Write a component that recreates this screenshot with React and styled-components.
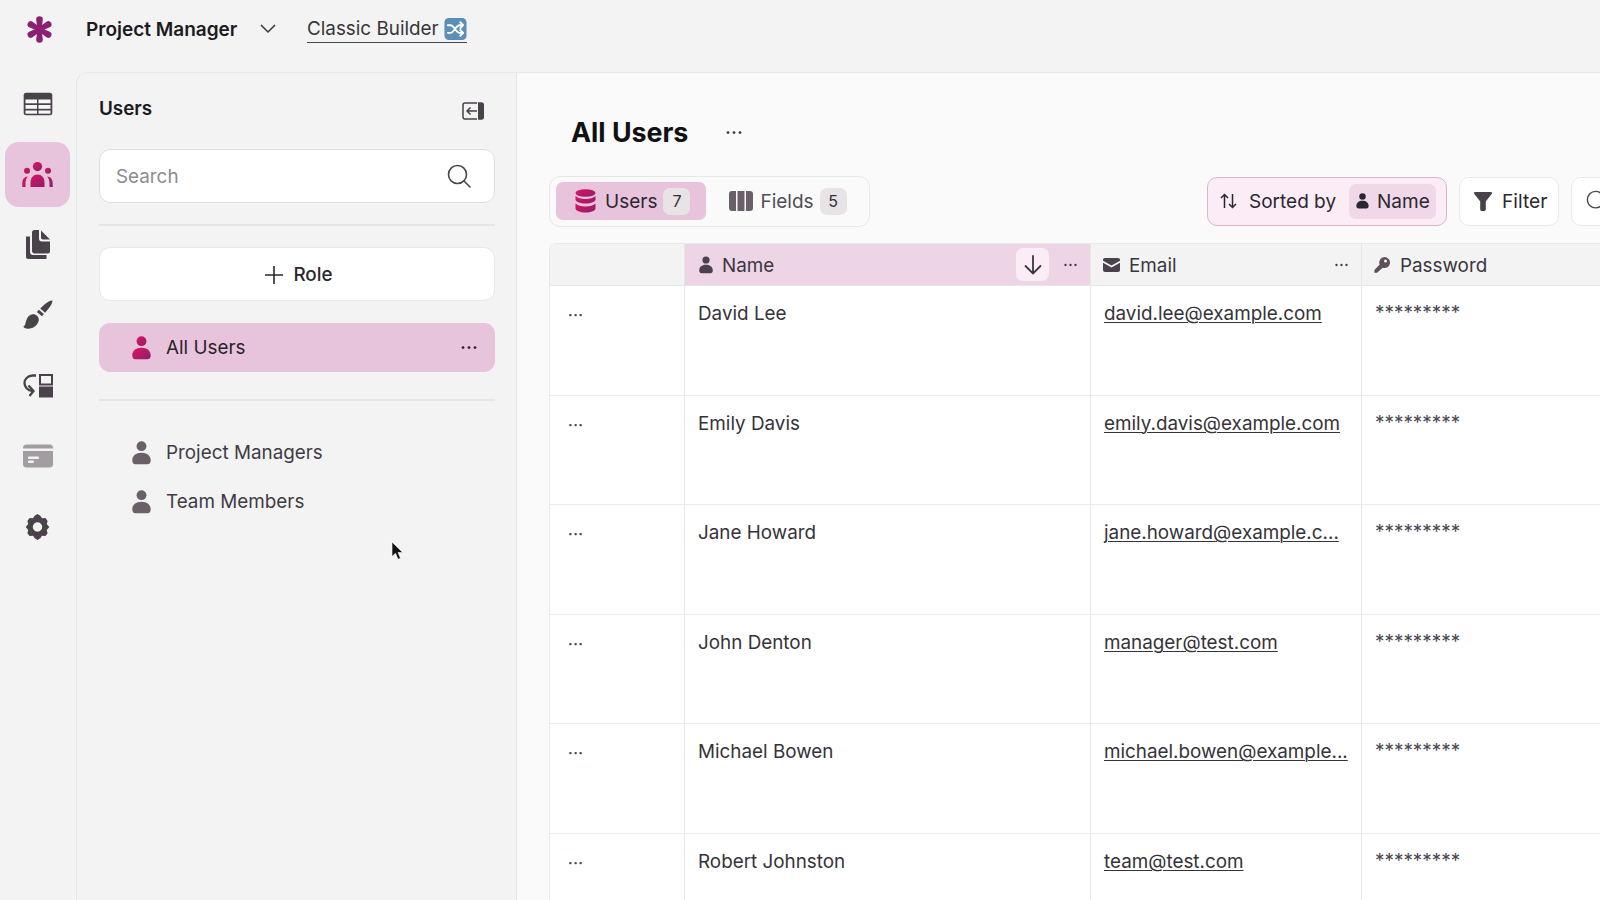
import React from "react";
import styled, { createGlobalStyle } from "styled-components";

const Global = createGlobalStyle`
  html, body { margin: 0; padding: 0; background: #f3f3f3; overflow: hidden; }
  * { box-sizing: border-box; }
  body { font-family: Inter, "Liberation Sans", sans-serif; color: #2b2730; -webkit-font-smoothing: antialiased; }
`;

const Page = styled.div`
  position: relative; width: 1600px; height: 900px; overflow: hidden;
  display: flex; flex-direction: column; background: #f3f3f3;
`;
const TopBar = styled.header`
  height: 72px; flex: none; display: flex; align-items: center; padding: 0 0 14px 25px;
`;
const LogoWrap = styled.div`width: 29px; height: 29px; margin-right: 32px; display: flex;`;
const AppName = styled.div`font-size: 19px; font-weight: 600; color: #1c1a1f; width: 150px; white-space: nowrap;`;
const ChevronWrap = styled.div`margin-left: 24px; width: 18px; display: flex;`;
const BuilderLink = styled.div`
  margin-left: 29px; font-size: 18.85px; color: #37343a; display: flex; align-items: center; gap: 5px;
  border-bottom: 1.5px solid #4a4650; height: 27px; line-height: 25px;
`;
const Body = styled.div`flex: 1; display: flex; min-height: 0;`;
const Rail = styled.nav`
  width: 76px; flex: none; display: flex; flex-direction: column; align-items: flex-start; padding: 0 0 0 5px; margin-top: -1px;
`;
const RailItem = styled.div`
  width: 65px; height: 65px; margin-bottom: 5.5px; border-radius: 14px; display: flex; align-items: center; justify-content: center;
  background: ${p => (p.$active ? "#e8c3dc" : "transparent")};
`;
const Panel = styled.aside`
  width: 441px; flex: none; background: #f3f3f3; border-left: 1px solid #e6e6e6; border-top: 1px solid #e9e9e9;
  border-right: 1px solid #e6e6e6; border-top-left-radius: 12px; padding: 0 21px 0 22px; display: flex; flex-direction: column;
`;
const PanelHead = styled.div`height: 76px; display: flex; align-items: center; justify-content: space-between; padding: 0 11px 6px 0;`;
const PanelTitle = styled.h2`margin: 0; font-size: 18.85px; font-weight: 600; color: #1c1a1f;`;
const CollapseSlot = styled.div`display: flex; margin-top: 5px;`;
const SearchBox = styled.div`
  height: 54px; background: #fff; border: 1.5px solid #dfdfdf; border-radius: 11px; display: flex; align-items: center; justify-content: space-between;
  padding: 0 23px 0 16px; font-size: 18.85px; color: #8d8a90;
`;
const Rule = styled.hr`border: 0; height: 2px; background: #e6e6e6; margin: ${p => p.$m};`;
const RoleButton = styled.div`
  height: 54px; background: #fff; border: 1.5px solid #e8e8e8; border-radius: 11px; display: flex; align-items: center; justify-content: center; gap: 9px;
  padding: 1px 0 0 3px; font-size: 18.85px; font-weight: 500; color: #2b2730;
`;
const RoleGap = styled.div`height: 22px; flex: none;`;
const RoleRow = styled.div`
  height: 49px; border-radius: 11px; display: flex; align-items: center; padding: 0 17px 0 33px; gap: 15px; font-size: 18.85px;
  background: ${p => (p.$active ? "#e8c3dc" : "transparent")};
  color: ${p => (p.$active ? "#28232b" : "#3f3b44")};
`;
const RoleLabel = styled.span`flex: 1;`;
const RoleList = styled.div`display: flex; flex-direction: column; padding-top: 27px;`;
const Hidden = styled.svg`width: 0; height: 0; position: absolute;`;
const Main = styled.main`flex: 1; min-width: 0; background: #fafafa; border-top: 1px solid #e9e9e9; padding-left: 32px; overflow: hidden;`;
const TitleRow = styled.div`height: 103px; display: flex; align-items: center; padding: 15px 0 0 22px; gap: 38px;`;
const Title = styled.h1`margin: 0; font-size: 26.8px; font-weight: 700; color: #111; width: 116px; white-space: nowrap;`;
const TitleDots = styled.span`display: flex; padding-top: 2px;`;
const Toolbar = styled.div`display: flex; align-items: center; height: 50px; width: 1100px;`;
const TabGroup = styled.div`
  width: 321px; height: 51px; flex: none; border: 1.5px solid #e8e8e8; border-radius: 11px; padding: 5px 5px 5px 6px; display: flex; gap: 7px;
`;
const Tab = styled.div`
  height: 38px; border-radius: 7px; display: flex; align-items: center; font-size: 19px; padding: 1px 16px 0 ${p => (p.$active ? "19px" : "16px")};
  background: ${p => (p.$active ? "#e8c3dc" : "transparent")}; color: ${p => (p.$active ? "#2b2730" : "#514c55")};
`;
const TabLabel = styled.span`margin: 0 6px 0 ${p => (p.$active ? "9px" : "7px")};`;
const Count = styled.span`
  width: 27px; height: 27px; border-radius: 7px; background: #e8e4e6; display: flex; align-items: center; justify-content: center; font-size: 16px; color: #332f36;
`;
const SortBox = styled.div`
  margin-left: 337px; width: 240px; height: 49px; flex: none; border: 1.5px solid #dcb4d0; background: #fbecf6; border-radius: 10px; display: flex; align-items: center;
  padding: 0 0 0 12px; font-size: 19px; color: #2b2730; white-space: nowrap;
`;
const SortLabel = styled.span`margin-left: 12px; margin-right: 12px; width: 88px;`;
const SortChip = styled.span`
  height: 35px; width: 87px; border-radius: 7px; background: #f0d8e9; display: flex; align-items: center; gap: 8px; padding-left: 7px; color: #2b2730;
`;
const ToolButton = styled.div`
  margin-left: ${p => p.$ml}; width: ${p => p.$w}; height: 49px; flex: none; background: #fff; border: 1.5px solid #e9e9e9; border-radius: 10px; display: flex; align-items: center;
  gap: 10px; padding-left: 14px; font-size: 19.2px; color: #2b2730;
`;
const Table = styled.div`
  margin-top: 17px; width: 1100px; display: grid; grid-template-columns: 135px 406px 271px 288px; grid-auto-rows: 109.6px;
  grid-template-rows: 42px; border-left: 1.5px solid #e8e8e8; border-top: 1.5px solid #e8e8e8; border-top-left-radius: 8px; background: #fff;
`;
const HeadCell = styled.div`
  display: flex; align-items: center; gap: ${p => p.$gap || "9px"}; padding: 0 12px 0 ${p => p.$pl || "12px"}; font-size: 18.85px; color: #3a3640;
  background: ${p => (p.$sorted ? "#eed5e6" : "#f3f3f3")}; border-bottom: 1.5px solid #e6e6e6; border-right: 1.5px solid #e6e6e6;
`;
const HeadLabel = styled.span`flex: 1; padding-top: 2px;`;
const SortArrow = styled.span`
  width: 33px; height: 33px; border-radius: 7px; background: #fbecf6; display: flex; align-items: center; justify-content: center; margin-right: 5px;
`;
const Cell = styled.div`
  padding: 14px 13px 0; font-size: 18.85px; line-height: 28px; color: #36323a; white-space: nowrap; overflow: hidden;
  border-bottom: 1.5px solid #ececec; border-right: 1.5px solid #e6e6e6;
`;
const HandleCell = styled(Cell)`padding: 15px 18px 0; font-size: 14px; font-weight: 700; letter-spacing: 0.5px; color: #4c4850;`;
const Mail = styled.a`color: #36323a; text-decoration: underline; text-underline-offset: 2px; text-decoration-thickness: 1px;`;
const Secret = styled(Cell)`padding-top: 16px; font-size: 18.9px; line-height: 22px; color: #4a4650;`;
const Cursor = styled.div`position: absolute; left: 391px; top: 541px; width: 14px; height: 20px;`;

const Dots = ({ c = "#3f3b44", s = 18 }) => (
  <svg width={s} height={s * 0.4} viewBox="0 0 18 7"><circle cx="3" cy="3.5" r="1.4" fill={c}/><circle cx="9" cy="3.5" r="1.4" fill={c}/><circle cx="15" cy="3.5" r="1.4" fill={c}/></svg>
);
const Grad = ({ id }) => (
  <linearGradient id={id} x1="0" y1="0" x2="1" y2="1"><stop offset="0" stopColor="#e0125f"/><stop offset="1" stopColor="#8d1f6d"/></linearGradient>
);
const Logo = () => (
  <svg width="29" height="29" viewBox="0 0 29 29">
    <g fill="#8c1f72">
      {[0, 60, 120, 180, 240, 300].map(a => (
        <path key={a} transform={`rotate(${a} 14.5 14.5)`} d="M11.2 4.5a3.3 3.3 0 0 1 6.6 0L16.6 14.5h-4.2z"/>
      ))}
      <circle cx="14.5" cy="14.5" r="4.6"/>
    </g>
  </svg>
);
const Person = ({ fill = "#6a6168", w = 19, h = 24 }) => (
  <svg width={w} height={h} viewBox="0 0 19 24">
    <circle cx="9.5" cy="5.2" r="4.9" fill={fill}/>
    <path d="M.3 19.5c0-4.8 3.6-7.800 9.2-7.800s9.200 3 9.200 7.800c0 2.400-1.200 3.700-3 3.700H3.300c-1.800 0-3-1.300-3-3.700z" fill={fill}/>
  </svg>
);
const Shuffle = () => (
  <svg width="23" height="24" viewBox="0 0 24 24">
    <rect x=".5" y=".5" width="23" height="23" rx="4.500" fill="#5a8fb8"/>
    <g stroke="#fff" strokeWidth="2" fill="none" strokeLinecap="round">
      <path d="M4 8h3c3 0 6 8 9 8h3M4 16h3c3 0 6-8 9-8h3"/>
      <path d="M17 5l3 3-3 3M17 13l3 3-3 3" strokeLinejoin="round"/>
    </g>
  </svg>
);
const TableIcon = () => (
  <svg width="30" height="24" viewBox="0 0 30 24">
    <rect x=".7" y=".7" width="28.600" height="22.600" rx="2.500" fill="#4a424a"/>
    <g fill="#f6f6f6">
      <rect x="2.500" y="7.500" width="11.500" height="3.800"/><rect x="15.500" y="7.500" width="12" height="3.800"/>
      <rect x="2.500" y="13" width="11.500" height="3.800"/><rect x="15.500" y="13" width="12" height="3.800"/>
      <rect x="2.500" y="18.500" width="11.500" height="3.200"/><rect x="15.500" y="18.500" width="12" height="3.200"/>
    </g>
  </svg>
);
const UsersIcon = () => (
  <svg width="31" height="26" viewBox="0 -1 31 26">
    <defs><Grad id="ug"/></defs>
    <g fill="url(#ug)">
      <circle cx="15.500" cy="4.600" r="4.600"/><circle cx="5" cy="8.800" r="3"/><circle cx="26" cy="8.800" r="3"/>
      <path d="M8.500 25v-4.500c0-5 3-8 7-8s7 3 7 8V25z"/>
      <path d="M.3 25v-3.500c0-4 2-6.800 5.500-7-1.500 1.800-2.300 4-2.300 7V25zM30.700 25v-3.500c0-4-2-6.800-5.500-7 1.500 1.800 2.300 4 2.300 7V25z"/>
    </g>
  </svg>
);
const FilesIcon = () => (
  <svg width="26" height="30" viewBox="0 0 26 30" fill="#4a424a">
    <path d="M7 2.500A2.500 2.500 0 0 1 9.500 0H14v8.500a3 3 0 0 0 3 3h8v9.500a2.500 2.500 0 0 1-2.500 2.500h-13A2.500 2.500 0 0 1 7 20.500z"/>
    <path d="M16 .5l9 9h-7a2 2 0 0 1-2-2z"/>
    <path d="M1 6.500h4v15.500c0 2 1.300 3 3 3h13.500v4H3.500A2.500 2.500 0 0 1 1 26.500z"/>
  </svg>
);
const BrushIcon = () => (
  <svg width="30" height="30" viewBox="0 0 30 30" fill="#4a424a">
    <path d="M29.500.5c.2 1.500-1.500 5-3.500 7.500l-3.800 4.700-5-4.300 4.800-4.400C24.500 1.800 28 .2 29.500.5z"/>
    <path d="M15.800 9.700l5.100 4.300-2 2.300-5-4.300z"/>
    <path d="M8.500 14.500c3.800-1.200 7.500 1.500 7.300 5.500-.5 4.500-5 8.800-10.800 8.800-2.700 0-4.700-1.400-4.500-2.300.1-.6 1-.6 1.500-1.500C3.300 21.500 3.500 16 8.500 14.500z"/>
  </svg>
);
const FlowIcon = () => (
  <svg width="30" height="24" viewBox="0 0 30 24">
    <path d="M13 1.500H9.500C5 1.500 1.500 5 1.500 9s3 7.500 7.500 8" stroke="#4a424a" strokeWidth="2.300" fill="none"/>
    <path d="M5.500 11.500L10.500 17l-4 5" stroke="#4a424a" strokeWidth="2.300" fill="none"/>
    <rect x="17" y="1" width="12" height="9.500" fill="none" stroke="#4a424a" strokeWidth="2"/>
    <rect x="16" y="12.500" width="14" height="11" fill="#4a424a"/>
  </svg>
);
const CardIcon = () => (
  <svg width="30" height="24" viewBox="0 0 30 24" fill="#a29da1">
    <path d="M0 4a3.500 3.500 0 0 1 3.500-3.500h23A3.500 3.500 0 0 1 30 4v.500H0z"/>
    <path d="M0 7h30v13a3.500 3.500 0 0 1-3.500 3.500h-23A3.500 3.500 0 0 1 0 20z"/>
    <rect x="5" y="12.500" width="11" height="2.500" fill="#f3f3f3" rx="1"/><rect x="5" y="16.500" width="6" height="2.500" fill="#f3f3f3" rx="1"/>
  </svg>
);
const GearIcon = () => (
  <svg width="27" height="28" viewBox="0 0 24 24" fill="#4a424a">
    <path fillRule="evenodd" d="M12 .5l2.500 1.500 1.500 2.300 3-.2 2 2.500-.8 2.700 2.300 2.700-2.300 2.700.8 2.800-2 2.400-3-.2-1.500 2.300L12 23.500 9.500 22 8 19.700l-3 .2-2-2.400.8-2.800L1.500 12l2.300-2.700L3 6.600l2-2.500 3 .2L9.500 2zM12 7.800a4.200 4.200 0 1 0 0 8.400 4.200 4.200 0 0 0 0-8.400z"/>
  </svg>
);
const CollapseIcon = () => (
  <svg width="22" height="18" viewBox="0 0 22 18">
    <path d="M15 1H3a2 2 0 0 0-2 2v12a2 2 0 0 0 2 2h12" fill="none" stroke="#4a424a" strokeWidth="1.500"/>
    <path d="M15 9H5M8.500 5.500L5 9l3.500 3.500" fill="none" stroke="#4a424a" strokeWidth="1.500"/>
    <path d="M16 .3h3.500A2.500 2.500 0 0 1 22 3v12a2.500 2.500 0 0 1-2.500 2.700H16z" fill="#4a424a"/>
  </svg>
);
const SearchGlyph = ({ s = 24, c = "#4a464c" }) => (
  <svg width={s} height={s} viewBox="0 0 24 24" fill="none" stroke={c} strokeWidth="1.600" strokeLinecap="round"><circle cx="10.500" cy="10.500" r="9"/><path d="M17 17l6 6"/></svg>
);
const Plus = () => (
  <svg width="20" height="20" viewBox="0 0 20 20" stroke="#2b2730" strokeWidth="1.600"><path d="M10 1v18M1 10h18"/></svg>
);
const Stack = () => (
  <svg width="21" height="24" viewBox="0 0 21 24">
    <defs><Grad id="sg"/></defs>
    <g fill="url(#sg)">
      <ellipse cx="10.500" cy="4" rx="10" ry="3.800"/>
      <path d="M.5 7c2 2 5.500 3 10 3s8-1 10-3v3.500c0 2.300-4.500 4-10 4s-10-1.700-10-4z"/>
      <path d="M.5 14.500c2 2 5.500 3 10 3s8-1 10-3v5c0 2.300-4.500 4-10 4s-10-1.700-10-4z"/>
    </g>
  </svg>
);
const Columns = () => (
  <svg width="24" height="20" viewBox="0 0 24 20" fill="#6a6168">
    <path d="M7 0v20H3a3 3 0 0 1-3-3V3a3 3 0 0 1 3-3z"/><rect x="8.500" width="7" height="20"/><path d="M17 0h4a3 3 0 0 1 3 3v14a3 3 0 0 1-3 3h-4z"/>
  </svg>
);
const SortIcon = () => (
  <svg width="17" height="16" viewBox="0 0 17 16" fill="none" stroke="#2b2730" strokeWidth="1.500"><path d="M4.500 15V1.500M1 5l3.500-3.500L8 5M12.500 1v13.500M9 11l3.500 3.500L16 11"/></svg>
);
const FunnelIcon = () => (
  <svg width="18" height="19" viewBox="0 0 18 19" fill="#4a424a"><path d="M1 0h16c.9 0 1.300 1 .8 1.700L11.800 9.500V17.500c0 .9-.7 1.500-1.500 1.500H7.700c-.8 0-1.500-.6-1.500-1.500V9.500L.2 1.700C-.3 1 .1 0 1 0z"/></svg>
);
const MailIcon = () => (
  <svg width="17" height="14" viewBox="0 0 17 14" fill="#4a424a">
    <path d="M2 0h13a2 2 0 0 1 2 2v.700L8.500 7.500 0 2.700V2a2 2 0 0 1 2-2z"/><path d="M0 4.700l8.500 4.800L17 4.700V12a2 2 0 0 1-2 2H2a2 2 0 0 1-2-2z"/>
  </svg>
);
const KeyIcon = () => (
  <svg width="16" height="16" viewBox="0 0 16 16" fill="#5b5358"><path fillRule="evenodd" d="M10.500 0a5.500 5.500 0 1 1-1.800 10.700L3 15.800H.4v-2.700l5.300-5.500A5.500 5.500 0 0 1 10.500 0zM11.500 2.500a1.500 1.500 0 1 0 0 3 1.500 1.500 0 0 0 0-3z"/></svg>
);
const DownArrow = () => (
  <svg width="18" height="20" viewBox="0 0 18 20" fill="none" stroke="#3a3640" strokeWidth="1.800" strokeLinecap="round"><path d="M9 1v17M1.500 11L9 18.500 16.500 11"/></svg>
);
const Chevron = () => (
  <svg width="16" height="10" viewBox="0 0 16 10" fill="none" stroke="#37343a" strokeWidth="1.500"><path d="M1 1l7 7 7-7"/></svg>
);
const Pointer = () => (
  <svg width="14" height="20" viewBox="0 0 14 20"><path d="M1 1v14.500l3.500-3.200 2.500 6 2.500-1-2.500-5.800h4.700z" fill="#111" stroke="#fff" strokeWidth=".6"/></svg>
);

const rows = [
  ["David Lee", "david.lee@example.com"],
  ["Emily Davis", "emily.davis@example.com"],
  ["Jane Howard", "jane.howard@example.c..."],
  ["John Denton", "manager@test.com"],
  ["Michael Bowen", "michael.bowen@example..."],
  ["Robert Johnston", "team@test.com"],
];
const railIcons = [<TableIcon/>, <UsersIcon/>, <FilesIcon/>, <BrushIcon/>, <FlowIcon/>, <CardIcon/>, <GearIcon/>];

export default function App() {
  return (
    <Page>
      <Global/>
      <TopBar>
        <LogoWrap><Logo/></LogoWrap>
        <AppName>Project Manager</AppName>
        <ChevronWrap><Chevron/></ChevronWrap>
        <BuilderLink>Classic Builder <Shuffle/></BuilderLink>
      </TopBar>
      <Body>
        <Rail>
          {railIcons.map((ic, i) => <RailItem key={i} $active={i === 1}>{ic}</RailItem>)}
        </Rail>
        <Panel>
          <Hidden><defs><Grad id="pg"/></defs></Hidden>
          <PanelHead><PanelTitle>Users</PanelTitle><CollapseSlot><CollapseIcon/></CollapseSlot></PanelHead>
          <SearchBox>Search<SearchGlyph/></SearchBox>
          <Rule $m="21px 0 21px"/>
          <RoleButton><Plus/>Role</RoleButton>
          <RoleGap/>
          <RoleRow $active><Person fill="url(#pg)"/><RoleLabel>All Users</RoleLabel><Dots c="#2b2730"/></RoleRow>
          <Rule $m="27px 0 0"/>
          <RoleList>
            <RoleRow><Person/><RoleLabel>Project Managers</RoleLabel></RoleRow>
            <RoleRow><Person/><RoleLabel>Team Members</RoleLabel></RoleRow>
          </RoleList>
        </Panel>
        <Main>
          <TitleRow><Title>All Users</Title><TitleDots><Dots c="#3f3b44"/></TitleDots></TitleRow>
          <Toolbar>
            <TabGroup>
              <Tab $active><Stack/><TabLabel $active>Users</TabLabel><Count>7</Count></Tab>
              <Tab><Columns/><TabLabel>Fields</TabLabel><Count>5</Count></Tab>
            </TabGroup>
            <SortBox>
              <SortIcon/><SortLabel>Sorted by</SortLabel>
              <SortChip><Person fill="#2b2730" w={13} h={16}/>Name</SortChip>
            </SortBox>
            <ToolButton $ml="12px" $w="100px"><FunnelIcon/>Filter</ToolButton>
            <ToolButton $ml="12px" $w="120px"><SearchGlyph s={22}/></ToolButton>
          </Toolbar>
          <Table>
            <HeadCell/>
            <HeadCell $sorted $pl="14px"><Person fill="#4a424a" w={14} h={18}/><HeadLabel>Name</HeadLabel><SortArrow><DownArrow/></SortArrow><Dots s={15}/></HeadCell>
            <HeadCell><MailIcon/><HeadLabel>Email</HeadLabel><Dots s={15}/></HeadCell>
            <HeadCell $pl="12px" $gap="10px"><KeyIcon/><HeadLabel>Password</HeadLabel></HeadCell>
            {rows.map(([n, m]) => (
              <React.Fragment key={n}>
                <HandleCell>···</HandleCell>
                <Cell>{n}</Cell>
                <Cell><Mail>{m}</Mail></Cell>
                <Secret>*********</Secret>
              </React.Fragment>
            ))}
          </Table>
        </Main>
      </Body>
      <Cursor><Pointer/></Cursor>
    </Page>
  );
}
